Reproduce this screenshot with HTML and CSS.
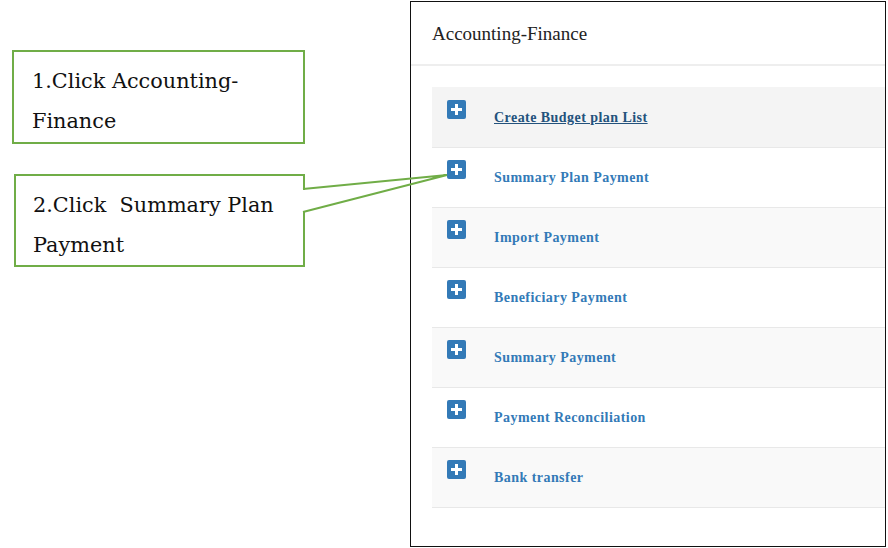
FILE: index.html
```html
<!DOCTYPE html>
<html>
<head>
<meta charset="utf-8">
<link rel="stylesheet" href="styles.css">
</head>
<body>
<div class="page">
  <div class="notes">
    <div class="note note1">1.Click Accounting-<br>Finance</div>
    <div class="note note2">2.Click&nbsp; Summary Plan<br>Payment</div>
    <svg class="pointer" width="460" height="280" viewBox="0 0 460 280">
      <rect x="302" y="190" width="5" height="21" fill="#fff"/>
      <polyline points="303,189 447,175 303,212" fill="none" stroke="#70ad47" stroke-width="2" stroke-linejoin="miter"/>
    </svg>
  </div>
  <div class="panel">
    <div class="panel-head">Accounting-Finance</div>
    <div class="panel-body">
      <div class="row row-odd row-active"><span class="plus"></span><a class="link link-active">Create Budget plan List</a></div>
      <div class="row"><span class="plus"></span><a class="link">Summary Plan Payment</a></div>
      <div class="row row-odd"><span class="plus"></span><a class="link">Import Payment</a></div>
      <div class="row"><span class="plus"></span><a class="link">Beneficiary Payment</a></div>
      <div class="row row-odd"><span class="plus"></span><a class="link">Summary Payment</a></div>
      <div class="row"><span class="plus"></span><a class="link">Payment Reconciliation</a></div>
      <div class="row row-odd row-last"><span class="plus"></span><a class="link">Bank transfer</a></div>
    </div>
  </div>
</div>
</body>
</html>
```

FILE: styles.css
```css
html, body {
  margin: 0;
  padding: 0;
  background: #fff;
}
.page {
  display: flex;
  width: 888px;
  height: 548px;
  overflow: hidden;
  position: relative;
}
.notes {
  width: 410px;
  flex: none;
  padding-top: 50px;
  box-sizing: border-box;
}
.note {
  border: 2px solid #70ad47;
  box-sizing: border-box;
  font-family: "DejaVu Serif", "Liberation Serif", serif;
  font-size: 20.8px;
  line-height: 40px;
  color: #111;
  background: #fff;
}
.note1 {
  margin-left: 12px;
  width: 293px;
  height: 94px;
  padding: 9px 0 0 18px;
}
.note2 {
  margin-left: 14px;
  margin-top: 30px;
  width: 291px;
  height: 93px;
  padding: 9px 0 0 17px;
}
.pointer {
  position: absolute;
  left: 0;
  top: 0;
  z-index: 2;
  pointer-events: none;
}
.panel {
  margin-top: 1px;
  width: 476px;
  height: 546px;
  box-sizing: border-box;
  border: 1px solid #111;
  overflow: hidden;
  background: #fff;
}
.panel-head {
  height: 62px;
  border-bottom: 2px solid #eee;
  box-sizing: content-box;
  padding-left: 21px;
  font-family: "Liberation Serif", serif;
  font-size: 19px;
  line-height: 19px;
  display: flex;
  align-items: center;
  color: #222;
}
.panel-body {
  padding: 21px 0 0 21px;
  margin-right: -40px;
}
.row {
  display: flex;
  align-items: flex-start;
  height: 60px;
  box-sizing: border-box;
  border-top: 1px solid #e8e8e8;
  background: #fff;
}
.row-odd { background: #f9f9f9; }
.row-active { background: #f4f4f4; border-top-color: #f4f4f4; }
.row-last { border-bottom: 1px solid #e8e8e8; height: 61px; }
.plus {
  position: relative;
  flex: none;
  width: 19px;
  height: 19px;
  margin: 12px 0 0 15px;
  border-radius: 2px;
  background: #337ab7;
}
.plus::before, .plus::after {
  content: "";
  position: absolute;
  background: #fff;
}
.plus::before {
  left: 4px;
  top: 8px;
  width: 11px;
  height: 3px;
}
.plus::after {
  left: 8px;
  top: 4px;
  width: 3px;
  height: 11px;
}
.link {
  margin: 20px 0 0 28px;
  font-family: "Liberation Serif", serif;
  font-weight: bold;
  font-size: 14px;
  line-height: 20px;
  letter-spacing: 0.45px;
  color: #337ab7;
  text-decoration: none;
}
.link-active {
  color: #23527c;
  text-decoration: underline;
}
```
